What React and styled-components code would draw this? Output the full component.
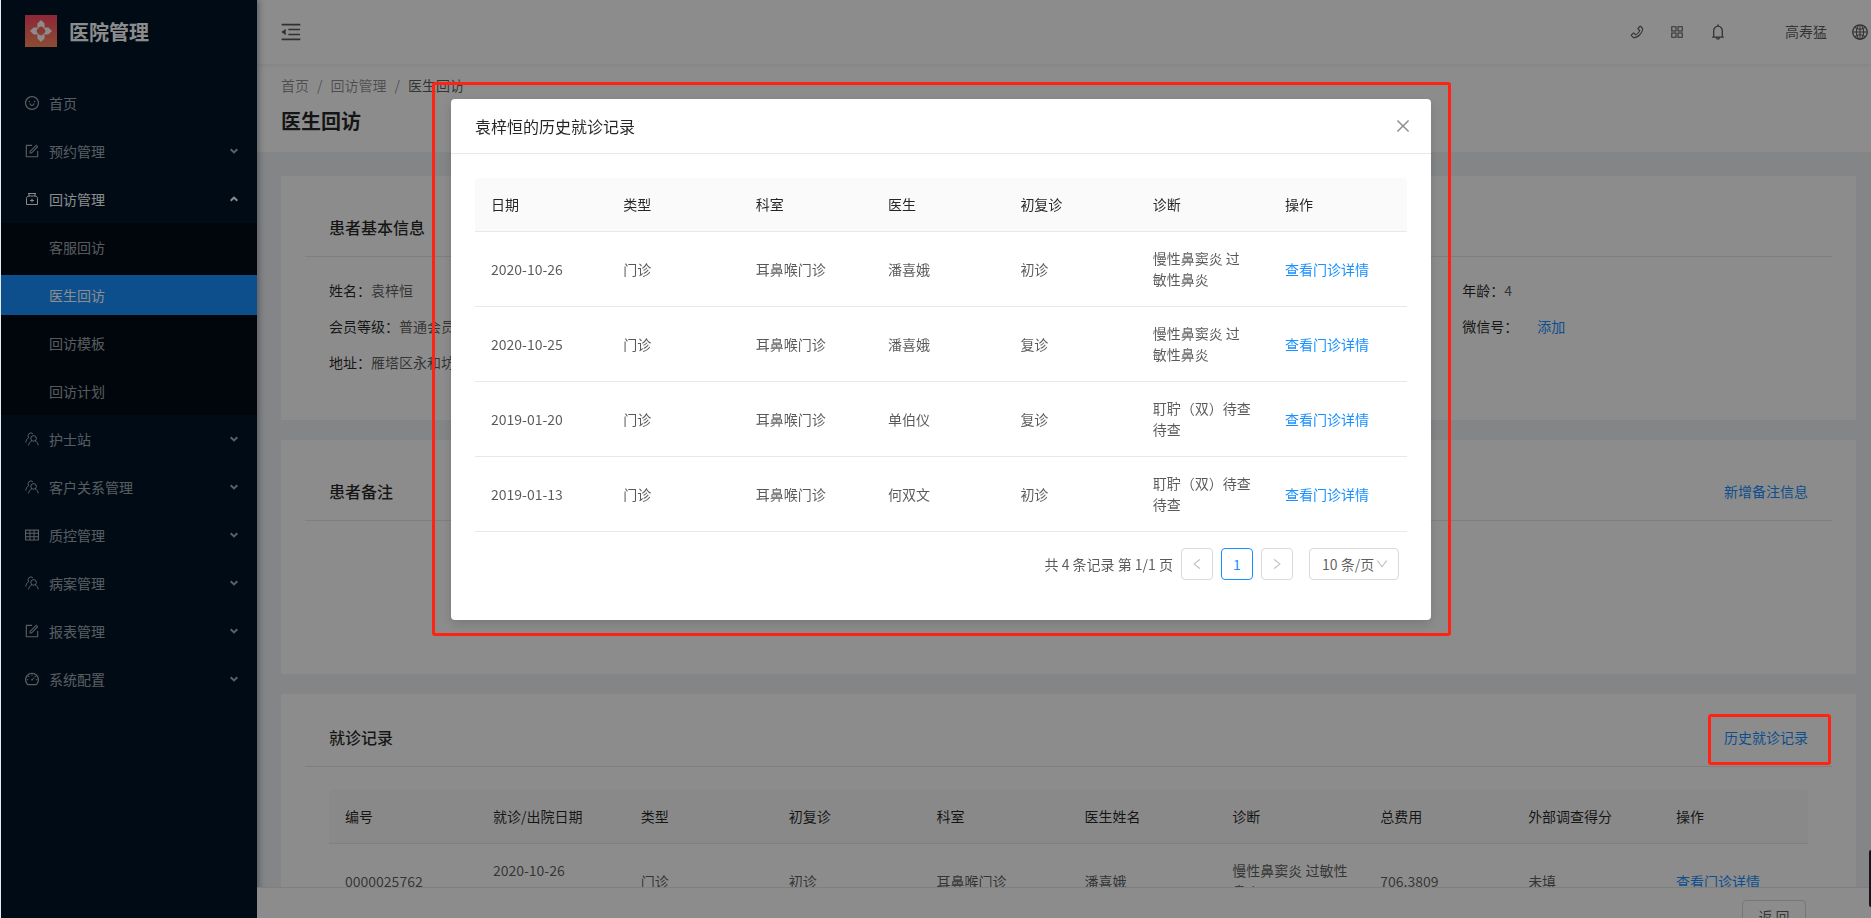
import React, { useState } from 'react';
import styled, { createGlobalStyle, css } from 'styled-components';
import {
  AiOutlineAppstore,
  AiOutlineBell,
  AiOutlineClose,
  AiOutlineDashboard,
  AiOutlineDown,
  AiOutlineForm,
  AiOutlineGlobal,
  AiOutlineLeft,
  AiOutlineMenuFold,
  AiOutlinePhone,
  AiOutlineRight,
  AiOutlineSmile,
  AiOutlineTable,
} from 'react-icons/ai';

const GlobalStyle = createGlobalStyle`
  * {
    box-sizing: border-box;
  }
  body {
    margin: 0;
    overflow: hidden;
    background: #e6ebf0;
    color: rgba(0, 0, 0, 0.65);
    font-family: 'Noto Sans CJK SC', 'Noto Sans', sans-serif;
    font-size: 14px;
    line-height: 21px;
  }
  button, select {
    font: inherit;
    color: inherit;
  }
  ul {
    margin: 0;
    padding: 0;
    list-style: none;
  }
`;

/* ---------- layout ---------- */

const Shell = styled.div`
  display: flex;
  height: 100vh;
  margin-left: 1px;
  overflow: hidden;
`;

const Main = styled.div`
  display: flex;
  flex: 1;
  flex-direction: column;
  min-width: 0;
  background: #f0f2f5;
`;

const Content = styled.main`
  flex: 1;
  min-height: 0;
  overflow: hidden;
`;

const Footer = styled.footer`
  position: relative;
  z-index: 12;
  flex: 0 0 31px;
  display: flex;
  justify-content: flex-end;
  align-items: flex-start;
  padding: 12px 65px 0 0;
  border-top: 1px solid #e8e8e8;
  background: #fff;
  overflow: hidden;
`;

const BackButton = styled.button`
  width: 64px;
  height: 32px;
  padding: 0;
  border: 1px solid #d9d9d9;
  border-radius: 4px;
  background: #fff;
`;

/* ---------- sidebar ---------- */

const Sider = styled.aside`
  position: relative;
  z-index: 10;
  flex: 0 0 256px;
  background: #001529;
  box-shadow: 2px 0 6px rgba(0, 21, 41, 0.35);
`;

const Brand = styled.a`
  display: flex;
  align-items: center;
  gap: 12px;
  height: 62px;
  padding-left: 24px;
  color: #fff;
  font-size: 20px;
  font-weight: 700;
  text-decoration: none;
`;

const Menu = styled.ul`
  padding-top: 17px;
`;

const SubMenu = styled.ul`
  background: #000c17;
`;

const MenuLink = styled.a`
  display: flex;
  align-items: center;
  height: 40px;
  margin: 4px 0;
  padding: 0 19px 0 ${({ $nested }) => ($nested ? '48px' : '23px')};
  color: ${({ $bright }) => ($bright ? '#fff' : 'rgba(255, 255, 255, 0.65)')};
  background: ${({ $active }) => ($active ? '#1890ff' : 'transparent')};
  text-decoration: none;
`;

const MenuItem = styled.li`
  display: flow-root;
`;

const MenuIcon = styled.span`
  display: flex;
  margin-right: 9px;
  font-size: 16px;
`;

const MenuText = styled.span`
  flex: 1;
`;

/* ---------- header ---------- */

const TopBar = styled.header`
  position: relative;
  z-index: 2;
  display: flex;
  flex: 0 0 64px;
  align-items: center;
  justify-content: space-between;
  padding-left: 22px;
  background: #fff;
  box-shadow: 0 1px 4px rgba(0, 21, 41, 0.08);
`;

const IconButton = styled.button`
  display: flex;
  padding: 0;
  border: 0;
  background: none;
  color: rgba(0, 0, 0, 0.65);
`;

const Tools = styled.div`
  display: flex;
  align-items: center;
  gap: 24px;
  padding-right: 2px;
`;

const UserName = styled.span`
  margin: 0 0 2px 34px;
`;

const PageHeader = styled.section`
  padding: 11px 24px 15px;
  background: #fff;
`;

const Breadcrumb = styled.nav`
  display: flex;
  gap: 8px;
  margin-bottom: 9px;
  color: rgba(0, 0, 0, 0.45);

  a {
    color: inherit;
    text-decoration: none;
  }
  span:last-child {
    color: rgba(0, 0, 0, 0.65);
  }
`;

const PageTitle = styled.h1`
  margin: 0;
  color: rgba(0, 0, 0, 0.85);
  font-size: 20px;
  font-weight: 700;
  line-height: 32px;
`;

/* ---------- cards ---------- */

const Cards = styled.div`
  display: grid;
  gap: 20px;
  padding: 24px 15px 0 24px;
`;

const Card = styled.section`
  min-height: ${({ $minHeight }) => $minHeight || 0}px;
  padding: ${({ $compact }) => ($compact ? '16px' : '24px')} 24px 0;
  background: #fff;
`;

const CardHead = styled.div`
  display: flex;
  align-items: center;
  justify-content: space-between;
  height: 57px;
  padding: 0 24px 2px;
  border-bottom: 1px solid #e8e8e8;
`;

const CardTitle = styled.h2`
  margin: 0;
  color: rgba(0, 0, 0, 0.85);
  font-size: 16px;
  font-weight: 500;
`;

const CardBody = styled.div`
  padding: 23px 24px 0;
`;

const TextLink = styled.a`
  color: #1890ff;
  text-decoration: none;
`;

const Info = styled.dl`
  display: grid;
  grid-template-columns: repeat(4, 1fr);
  gap: 16px 32px;
  margin: 0;
`;

const InfoItem = styled.div`
  display: flex;
  grid-column: ${({ $column }) => $column};
  line-height: 20px;
  white-space: nowrap;

  dt {
    color: rgba(0, 0, 0, 0.85);
  }
  dd {
    margin: 0;
  }
  ${TextLink} {
    margin-left: 19px;
  }
`;

const DataTable = styled.table`
  width: 100%;
  table-layout: fixed;
  border-spacing: 0;
  text-align: left;

  th {
    width: ${({ $column }) => $column};
    padding: 16px;
    border-bottom: 1px solid #e8e8e8;
    background: #fafafa;
    color: rgba(0, 0, 0, 0.85);
    font-weight: 400;
  }
  th:first-child {
    border-top-left-radius: 4px;
  }
  th:last-child {
    width: auto;
    border-top-right-radius: 4px;
  }
  td {
    padding: 16px;
    border-bottom: 1px solid #e8e8e8;
  }
`;

/* ---------- modal ---------- */

const Mask = styled.div`
  position: fixed;
  inset: 0 0 0 1px;
  z-index: 20;
  display: flex;
  align-items: flex-start;
  justify-content: center;
  padding: 99px 0 0 10px;
  background: rgba(0, 0, 0, 0.45);
`;

const Dialog = styled.div`
  width: 980px;
  border-radius: 4px;
  background: #fff;
  box-shadow: 0 4px 12px rgba(0, 0, 0, 0.15);
`;

const DialogHead = styled.div`
  display: flex;
  align-items: center;
  justify-content: space-between;
  height: 55px;
  padding: 0 19px 0 24px;
  border-bottom: 1px solid #e8e8e8;
`;

const DialogTitle = styled.h3`
  margin: 0;
  color: rgba(0, 0, 0, 0.85);
  font-size: 16px;
  font-weight: 400;
`;

const CloseButton = styled(IconButton)`
  color: rgba(0, 0, 0, 0.45);
`;

const DialogBody = styled.div`
  padding: 24px 24px 40px;
`;

const Pagination = styled.div`
  display: flex;
  align-items: center;
  justify-content: flex-end;
  gap: 8px;
  margin-top: 16px;
  padding-right: 8px;
`;

const PageButton = styled.button`
  display: flex;
  align-items: center;
  justify-content: center;
  width: 32px;
  height: 32px;
  padding: 0;
  border: 1px solid #d9d9d9;
  border-radius: 4px;
  background: #fff;
  color: rgba(0, 0, 0, 0.25);

  ${({ $current }) =>
    $current &&
    css`
      border-color: #1890ff;
      color: #1890ff;
    `}
`;

const SizePicker = styled.div`
  position: relative;
  margin-left: 8px;

  select {
    width: 90px;
    height: 32px;
    padding: 0 0 0 12px;
    border: 1px solid #d9d9d9;
    border-radius: 4px;
    background: #fff;
    appearance: none;
  }
  svg {
    position: absolute;
    top: 9px;
    right: 10px;
    color: rgba(0, 0, 0, 0.25);
    pointer-events: none;
  }
`;

/* ---------- callouts ---------- */

const Callout = styled.div`
  position: fixed;
  z-index: 30;
  border: 3px solid #ff2314;
  border-radius: 3px;
  pointer-events: none;
`;

const DialogCallout = styled(Callout)`
  top: 82px;
  left: calc(50% - 504px);
  width: 1019px;
  height: 554px;
`;

const LinkCallout = styled(Callout)`
  top: 714px;
  right: 40px;
  width: 123px;
  height: 51px;
`;

const SideHandle = styled.div`
  position: fixed;
  right: 0;
  bottom: 11px;
  z-index: 30;
  width: 2px;
  height: 57px;
  border-radius: 2px 0 0 2px;
  background: #14161f;
`;

/* ---------- drawings ---------- */

const Logo = () => (
  <svg width="32" height="32" viewBox="0 0 32 32">
    <defs>
      <linearGradient id="logo" x1="0" y1="0" x2="0" y2="1">
        <stop offset="0" stopColor="#ff4766" />
        <stop offset="1" stopColor="#ff8a5c" />
      </linearGradient>
    </defs>
    <rect width="32" height="32" fill="url(#logo)" />
    {[0, 90, 180, 270].map((angle) => (
      <path
        key={angle}
        transform={`rotate(${angle} 16 16)`}
        fill="#fff"
        d="M16 5 L19.6 8.6 V12.2 L18.6 13.2 A2.9 2.9 0 0 0 13.4 13.2 L12.4 12.2 V8.6 Z"
      />
    ))}
  </svg>
);

const PeopleIcon = () => (
  <svg width="16" height="16" viewBox="-1 -1 16 16" fill="none" stroke="currentColor">
    <circle cx="8.6" cy="6.4" r="2.8" />
    <path d="M3.6 13.3 C3.9 11 5 9.8 6.8 9 M10.2 9 C12 9.8 12.9 11.2 13.2 13.3" />
    <path d="M8 1.9 A2.8 2.8 0 1 0 3.8 5.7 C2 6.6 1 8.2 0.8 10.4" />
  </svg>
);

const KitIcon = () => (
  <svg width="16" height="16" viewBox="-1 -1 16 16" fill="none" stroke="currentColor">
    <path d="M3 1.5 H11 M4 1.5 V4 M10 1.5 V4 M4 4 C2.2 4.3 1.5 5.2 1.5 6.4 V12.5 H12.5 V6.4 C12.5 5.2 11.8 4.3 10 4 Z" />
    <path d="M7 6.6 V10.4 M5.1 8.5 H8.9" />
  </svg>
);

const Chevron = ({ open }) => (
  <svg width="8" height="6" viewBox="0 0 8 6" fill="none" stroke="currentColor" strokeWidth="2">
    <path d={open ? 'M0.7 4.8 L4 1.6 L7.3 4.8' : 'M0.7 1.2 L4 4.4 L7.3 1.2'} />
  </svg>
);

/* ---------- data ---------- */

const menu = [
  { text: '首页', icon: <AiOutlineSmile /> },
  { text: '预约管理', icon: <AiOutlineForm />, group: true },
  {
    text: '回访管理',
    icon: <KitIcon />,
    group: true,
    children: ['客服回访', '医生回访', '回访模板', '回访计划'],
  },
  { text: '护士站', icon: <PeopleIcon />, group: true },
  { text: '客户关系管理', icon: <PeopleIcon />, group: true },
  { text: '质控管理', icon: <AiOutlineTable />, group: true },
  { text: '病案管理', icon: <PeopleIcon />, group: true },
  { text: '报表管理', icon: <AiOutlineForm />, group: true },
  { text: '系统配置', icon: <AiOutlineDashboard />, group: true },
];

const visitColumns = [
  '编号',
  '就诊/出院日期',
  '类型',
  '初复诊',
  '科室',
  '医生姓名',
  '诊断',
  '总费用',
  '外部调查得分',
  '操作',
];

const visits = [
  ['0000025762', '2020-10-26', '门诊', '初诊', '耳鼻喉门诊', '潘喜娥', '慢性鼻窦炎 过敏性鼻炎', '706.3809', '未填'],
];

const historyColumns = ['日期', '类型', '科室', '医生', '初复诊', '诊断', '操作'];

const history = [
  ['2020-10-26', '门诊', '耳鼻喉门诊', '潘喜娥', '初诊', '慢性鼻窦炎 过敏性鼻炎'],
  ['2020-10-25', '门诊', '耳鼻喉门诊', '潘喜娥', '复诊', '慢性鼻窦炎 过敏性鼻炎'],
  ['2019-01-20', '门诊', '耳鼻喉门诊', '单伯仪', '复诊', '耵聍（双）待查 待查'],
  ['2019-01-13', '门诊', '耳鼻喉门诊', '何双文', '初诊', '耵聍（双）待查 待查'],
];

const Records = ({ columns, rows, column, twoLineDate }) => (
  <DataTable $column={column}>
    <thead>
      <tr>
        {columns.map((name) => (
          <th key={name}>{name}</th>
        ))}
      </tr>
    </thead>
    <tbody>
      {rows.map((row, index) => (
        <tr key={index}>
          {row.map((cell, i) => (
            <td key={i}>
              {cell}
              {twoLineDate && i === 1 && (
                <>
                  <br />
                  &nbsp;
                </>
              )}
            </td>
          ))}
          <td>
            <TextLink href="#detail">查看门诊详情</TextLink>
          </td>
        </tr>
      ))}
    </tbody>
  </DataTable>
);

const Sidebar = () => (
  <Sider>
    <Brand href="#home">
      <Logo />
      医院管理
    </Brand>
    <Menu>
      {menu.map(({ text, icon, group, children }) => (
        <React.Fragment key={text}>
          <MenuItem>
            <MenuLink href="#menu" $bright={!!children}>
              <MenuIcon>{icon}</MenuIcon>
              <MenuText>{text}</MenuText>
              {group && <Chevron open={!!children} />}
            </MenuLink>
          </MenuItem>
          {children && (
            <SubMenu>
              {children.map((child) => (
                <MenuItem key={child}>
                  <MenuLink
                    href="#menu"
                    $nested
                    $bright={child === '医生回访'}
                    $active={child === '医生回访'}
                  >
                    {child}
                  </MenuLink>
                </MenuItem>
              ))}
            </SubMenu>
          )}
        </React.Fragment>
      ))}
    </Menu>
  </Sider>
);

const HistoryDialog = ({ onClose }) => {
  const [pageSize, setPageSize] = useState('10');

  return (
    <Mask>
      <Dialog role="dialog" aria-labelledby="history-title">
        <DialogHead>
          <DialogTitle id="history-title">袁梓恒的历史就诊记录</DialogTitle>
          <CloseButton aria-label="关闭" onClick={onClose}>
            <AiOutlineClose size={18} />
          </CloseButton>
        </DialogHead>
        <DialogBody>
          <Records columns={historyColumns} rows={history} column="14.2%" />
          <Pagination>
            <span>共 4 条记录 第 1/1 页</span>
            <PageButton aria-label="上一页">
              <AiOutlineLeft size={14} />
            </PageButton>
            <PageButton $current>1</PageButton>
            <PageButton aria-label="下一页">
              <AiOutlineRight size={14} />
            </PageButton>
            <SizePicker>
              <select
                aria-label="每页条数"
                value={pageSize}
                onChange={(e) => setPageSize(e.target.value)}
              >
                <option value="10">10 条/页</option>
                <option value="20">20 条/页</option>
              </select>
              <AiOutlineDown size={14} />
            </SizePicker>
          </Pagination>
        </DialogBody>
      </Dialog>
    </Mask>
  );
};

const App = () => {
  const [historyOpen, setHistoryOpen] = useState(true);

  return (
    <>
      <GlobalStyle />
      <Shell>
        <Sidebar />
        <Main>
          <TopBar>
            <IconButton aria-label="收起菜单">
              <AiOutlineMenuFold size={24} />
            </IconButton>
            <Tools>
              <IconButton aria-label="电话">
                <AiOutlinePhone size={16} />
              </IconButton>
              <IconButton aria-label="应用">
                <AiOutlineAppstore size={16} />
              </IconButton>
              <IconButton aria-label="通知">
                <AiOutlineBell size={18} />
              </IconButton>
              <UserName>高寿猛</UserName>
              <IconButton aria-label="语言">
                <AiOutlineGlobal size={18} />
              </IconButton>
            </Tools>
          </TopBar>
          <Content>
            <PageHeader>
              <Breadcrumb>
                <a href="#home">首页</a>
                <span>/</span>
                <a href="#visit">回访管理</a>
                <span>/</span>
                <span>医生回访</span>
              </Breadcrumb>
              <PageTitle>医生回访</PageTitle>
            </PageHeader>
            <Cards>
              <Card $minHeight={244}>
                <CardHead>
                  <CardTitle>患者基本信息</CardTitle>
                </CardHead>
                <CardBody>
                  <Info>
                    <InfoItem $column={1}>
                      <dt>姓名：</dt>
                      <dd>袁梓恒</dd>
                    </InfoItem>
                    <InfoItem $column={4}>
                      <dt>年龄：</dt>
                      <dd>4</dd>
                    </InfoItem>
                    <InfoItem $column={1}>
                      <dt>会员等级：</dt>
                      <dd>普通会员</dd>
                    </InfoItem>
                    <InfoItem $column={4}>
                      <dt>微信号：</dt>
                      <dd>
                        <TextLink href="#wechat">添加</TextLink>
                      </dd>
                    </InfoItem>
                    <InfoItem $column={1}>
                      <dt>地址：</dt>
                      <dd>雁塔区永和坊</dd>
                    </InfoItem>
                  </Info>
                </CardBody>
              </Card>
              <Card $minHeight={234}>
                <CardHead>
                  <CardTitle>患者备注</CardTitle>
                  <TextLink href="#note">新增备注信息</TextLink>
                </CardHead>
              </Card>
              <Card $compact>
                <CardHead>
                  <CardTitle>就诊记录</CardTitle>
                  <TextLink href="#history" onClick={() => setHistoryOpen(true)}>
                    历史就诊记录
                  </TextLink>
                </CardHead>
                <CardBody>
                  <Records columns={visitColumns} rows={visits} column="10%" twoLineDate />
                </CardBody>
              </Card>
            </Cards>
          </Content>
          <Footer>
            <BackButton>返 回</BackButton>
          </Footer>
        </Main>
      </Shell>
      {historyOpen && <HistoryDialog onClose={() => setHistoryOpen(false)} />}
      <DialogCallout />
      <LinkCallout />
      <SideHandle />
    </>
  );
};

export default App;
